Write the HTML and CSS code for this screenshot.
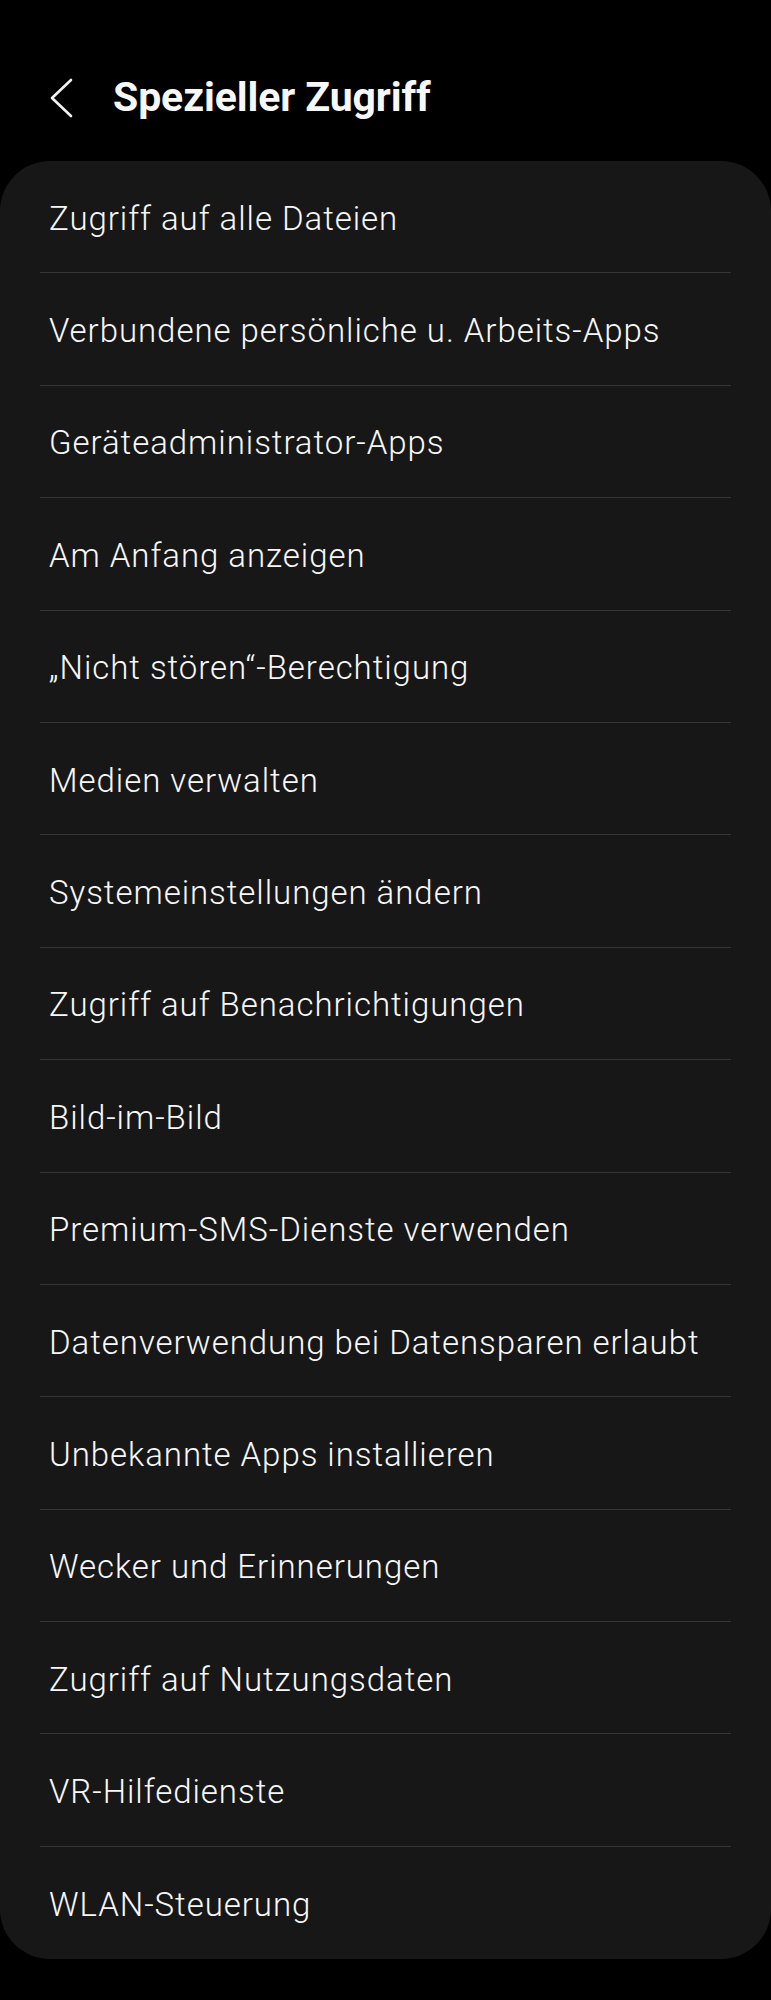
FILE: index.html
```html
<!DOCTYPE html>
<html lang="de">
<head>
<meta charset="utf-8">
<link rel="stylesheet" href="styles.css">
</head>
<body>
<header class="topbar">
  <svg class="back" width="24" height="40" viewBox="0 0 24 40"><polyline points="21,2 2,20 21,38" fill="none" stroke="#f2f2f2" stroke-width="2.6" stroke-linecap="round" stroke-linejoin="round"/></svg>
  <h1 class="title">Spezieller Zugriff</h1>
</header>
<main class="card">
  <div class="row"><span>Zugriff auf alle Dateien</span></div>
  <div class="row"><span>Verbundene persönliche u. Arbeits-Apps</span></div>
  <div class="row"><span>Geräteadministrator-Apps</span></div>
  <div class="row"><span>Am Anfang anzeigen</span></div>
  <div class="row"><span>„Nicht stören“-Berechtigung</span></div>
  <div class="row"><span>Medien verwalten</span></div>
  <div class="row"><span>Systemeinstellungen ändern</span></div>
  <div class="row"><span>Zugriff auf Benachrichtigungen</span></div>
  <div class="row"><span>Bild-im-Bild</span></div>
  <div class="row"><span>Premium-SMS-Dienste verwenden</span></div>
  <div class="row"><span>Datenverwendung bei Datensparen erlaubt</span></div>
  <div class="row"><span>Unbekannte Apps installieren</span></div>
  <div class="row"><span>Wecker und Erinnerungen</span></div>
  <div class="row"><span>Zugriff auf Nutzungsdaten</span></div>
  <div class="row"><span>VR-Hilfedienste</span></div>
  <div class="row"><span>WLAN-Steuerung</span></div>
</main>
</body>
</html>
```
FILE: styles.css
```css
html, body {
  margin: 0;
  padding: 0;
  background: #000;
}
body {
  font-family: Roboto, "Noto Sans", sans-serif;
  color: #f7f7f7;
  width: 771px;
  min-height: 2000px;
}
.topbar {
  height: 161px;
  display: flex;
  align-items: center;
  padding-left: 50px;
  box-sizing: border-box;
  padding-top: 34px;
}
.back {
  display: block;
  flex: none;
}
.title {
  margin: 0 0 0 39px;
  font-size: 41px;
  font-weight: 700;
  letter-spacing: -0.1px;
  line-height: 1;
}
.card {
  display: block;
  background: #171717;
  border-radius: 50px;
}
.row {
  height: 112.4px;
  box-sizing: border-box;
  margin: 0 40px 0 40px;
  padding-left: 9px;
  display: flex;
  align-items: center;
  border-bottom: 1.5px solid #363636;
  font-size: 33px;
  font-weight: 300;
  letter-spacing: 0.95px;
  padding-top: 3px;
}
.row:last-child {
  border-bottom: none;
}
```
